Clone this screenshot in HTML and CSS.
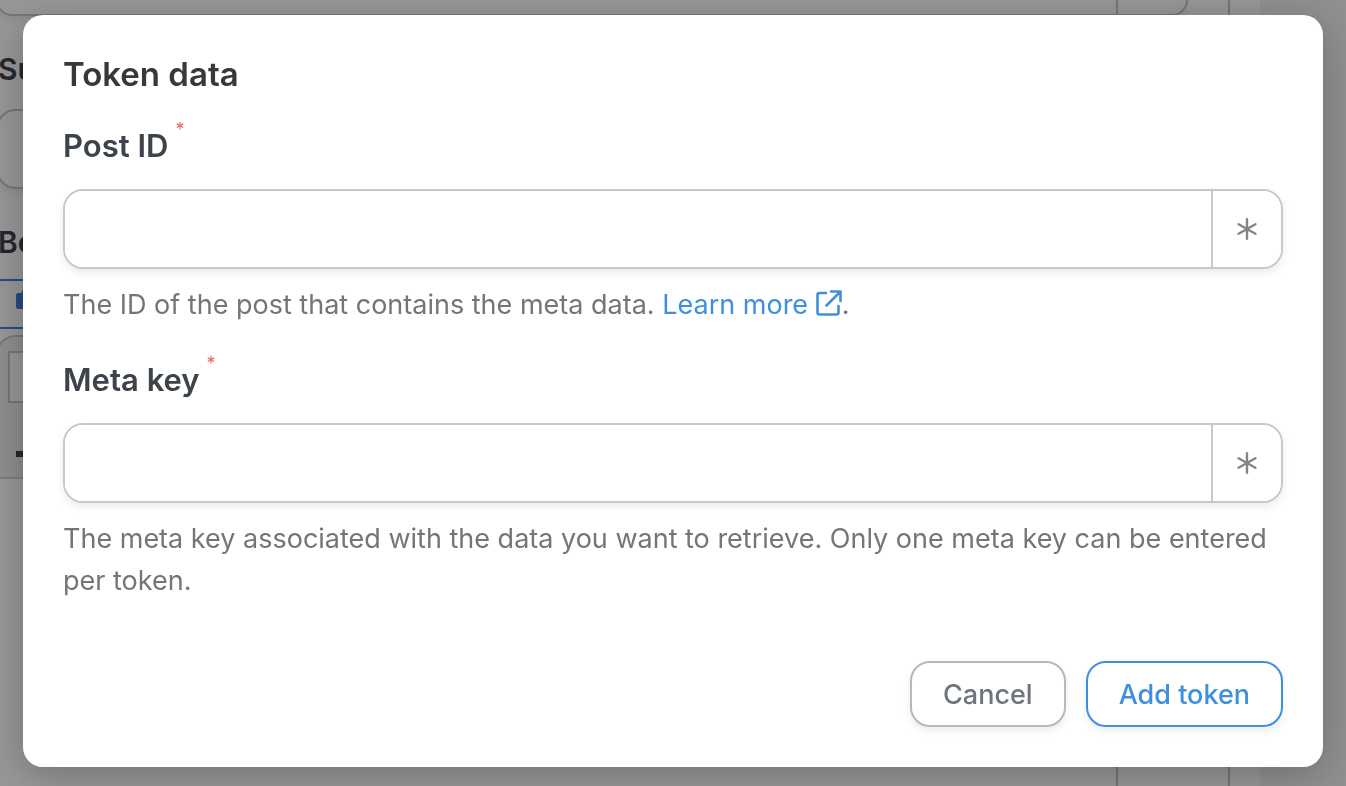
FILE: index.html
```
<!DOCTYPE html>
<html lang="en">
<head>
<meta charset="utf-8">
<meta name="viewport" content="width=device-width, initial-scale=1">
<title>Token data</title>
<link rel="stylesheet" href="styles.css">
</head>
<body>
<div class="page" inert>
  <div class="page-main">
    <div class="panel">
      <div class="back-field back-field-top"><span class="back-side"></span></div>
      <div class="back-label">Su</div>
      <div class="back-field"><span class="back-side"></span></div>
      <div class="back-label">Bo</div>
      <div class="media">
        <svg width="30" height="24" viewBox="0 0 30 24" aria-hidden="true"><path d="M2 4h3l3-5h10l3 5h4q2 0 2 2v12q0 2-2 2H2q-2 0-2-2V6q0-2 2-2z" fill="currentColor"/><circle cx="12" cy="10" r="5" fill="#fff"/></svg>
      </div>
      <div class="editor">
        <div class="editor-main">
          <div class="toolbar"><div class="format"></div><div class="dash"></div></div>
        </div>
        <span class="back-side"></span>
      </div>
    </div>
  </div>
</div>
<div class="overlay">
  <form class="modal" role="dialog" aria-labelledby="modal-title">
    <h1 class="title" id="modal-title">Token data</h1>
    <div class="group">
      <label class="label" for="post-id">Post ID<span class="required">*</span></label>
      <div class="field">
        <input class="input" id="post-id" type="text">
        <button class="picker" type="button" aria-label="Insert token for Post ID">
          <svg width="20" height="22" viewBox="0 0 20 22" aria-hidden="true"><path d="M10 1.2v19.6M1.6 6.2l16.8 9.6M18.4 6.2L1.6 15.8"/></svg>
        </button>
      </div>
      <p class="help">The ID of the post that contains the meta data. <a class="link" href="#">Learn more <svg class="external" width="26" height="26" viewBox="0 0 26 26" aria-hidden="true"><path d="M10 3H3.500Q1.500 3 1.500 5v17.500q0 2 2 2h17q2 0 2-2V16M15 1.500h9.500V11M24 2L10.500 15.500"/></svg></a>.</p>
    </div>
    <div class="group">
      <label class="label" for="meta-key">Meta key<span class="required">*</span></label>
      <div class="field">
        <input class="input" id="meta-key" type="text">
        <button class="picker" type="button" aria-label="Insert token for Meta key">
          <svg width="20" height="22" viewBox="0 0 20 22" aria-hidden="true"><path d="M10 1.2v19.6M1.6 6.2l16.8 9.6M18.4 6.2L1.6 15.8"/></svg>
        </button>
      </div>
      <p class="help">The meta key associated with the data you want to retrieve. Only one meta key can be entered per token.</p>
    </div>
    <div class="actions">
      <button class="button" type="button">Cancel</button>
      <button class="button button-primary" type="submit">Add token</button>
    </div>
  </form>
</div>
</body>
</html>
```
FILE: styles.css
```
* { box-sizing: border-box; }

body {
  margin: 0;
  background: #f0f0f1;
  font-family: Inter, "Liberation Sans", sans-serif;
  overflow: hidden;
}

.page { height: 100vh; overflow: hidden; padding-right: 86px; }
.page-main { height: 100%; background: #fcfcfc; padding-right: 30px; }

.panel {
  display: flex;
  flex-direction: column;
  height: 100%;
  margin-left: -4px;
  padding-right: 40px;
  border-right: 2px solid #c4c4c4;
}

.back-field {
  display: flex;
  justify-content: flex-end;
  flex: none;
  height: 80px;
  border: 2px solid #c4c4c4;
  border-radius: 20px;
  box-shadow: 0 4px 8px rgba(0, 0, 0, 0.08);
}
.back-field-top { height: 16px; border-top: 0; border-radius: 0 0 20px 20px; }
.back-side { width: 70px; border-left: 2px solid #c4c4c4; }

.back-label {
  flex: none;
  height: 93px;
  padding: 32px 0 0 2px;
  font-size: 30px;
  font-weight: 600;
  line-height: 42px;
  color: #3c434a;
}

.media {
  flex: none;
  width: 200px;
  height: 50px;
  margin-top: -3px;
  padding: 8px 18px;
  border: 2px solid #3d80cc;
  border-radius: 6px;
  color: #3d80cc;
}
.media svg { overflow: visible; }

.editor {
  display: flex;
  flex: 1;
  margin-top: 6px;
  border: 2px solid #c4c4c4;
  border-width: 2px 0 0 2px;
  border-radius: 20px 20px 0 0;
  overflow: hidden;
}
.editor .back-side { width: 72px; }
.editor-main { flex: 1; }
.toolbar { height: 142px; padding: 14px 10px; background: #ebeeee; border-bottom: 2px solid #d0d0d0; }
.format { width: 240px; height: 52px; border: 2px solid #c4c4c4; background: #fcfcfc; }
.dash { width: 24px; height: 6px; margin: 48px 0 0 8px; background: #3c434a; }

.overlay {
  position: fixed;
  inset: 0;
  display: flex;
  align-items: flex-start;
  padding: 15px 23px;
  background: rgba(0, 0, 0, 0.4);
}

.modal {
  flex: 1;
  padding: 40px;
  background: #fff;
  border-radius: 20px;
  box-shadow: 0 8px 40px rgba(0, 0, 0, 0.25);
}

.title {
  margin: 0;
  font-size: 33px;
  font-weight: 600;
  line-height: 38px;
  color: #383838;
}

.group { padding-top: 31px; }
.group + .group { padding-top: 32px; }

.label {
  display: flex;
  align-items: flex-start;
  gap: 7px;
  font-size: 31px;
  font-weight: 600;
  line-height: 44px;
  color: #3c434a;
}
.required { font-size: 18px; font-weight: 400; line-height: 12px; color: #f0625d; }

.field {
  display: flex;
  height: 80px;
  margin-top: 21px;
  border: 2px solid #c8c8c8;
  border-radius: 20px;
  box-shadow: 0 4px 8px rgba(0, 0, 0, 0.08);
}
.input {
  flex: 1;
  min-width: 0;
  padding: 0 24px;
  border: 0;
  border-radius: 18px 0 0 18px;
  background: #fff;
  font: 28px Inter, sans-serif;
  outline: 0;
}
.picker {
  display: grid;
  place-items: center;
  width: 70px;
  padding: 0;
  border: 0;
  border-left: 2px solid #c8c8c8;
  border-radius: 0 18px 18px 0;
  background: #fff;
}
.picker svg { fill: none; stroke: #858585; stroke-width: 2.4; stroke-linecap: round; }

.help {
  margin: 15px 0 0;
  font-size: 27px;
  line-height: 42px;
  color: #757575;
}
.link { color: #3f8fe0; text-decoration: none; }
.external {
  vertical-align: -2px;
  fill: none;
  stroke: currentColor;
  stroke-width: 2.6;
  stroke-linecap: round;
  stroke-linejoin: round;
}

.actions { display: flex; justify-content: flex-end; gap: 20px; margin-top: 59px; }
.button {
  height: 66px;
  padding: 0 31px;
  border: 2px solid #b8b8b8;
  border-radius: 20px;
  background: #fff;
  box-shadow: 0 4px 8px rgba(0, 0, 0, 0.08);
  font: 500 27px Inter, sans-serif;
  color: #6c757d;
}
.button-primary { border-color: #3f8fe0; color: #3f8fe0; }
```
